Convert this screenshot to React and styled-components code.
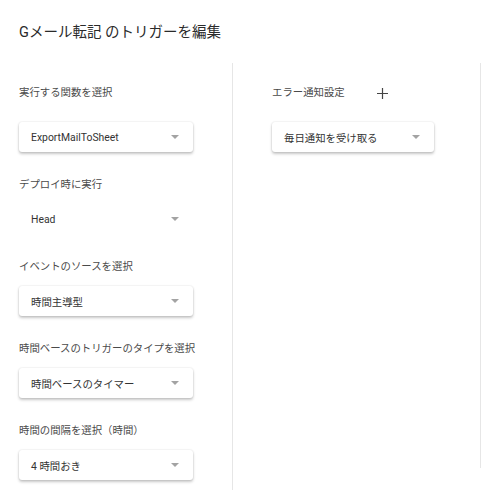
import React from 'react';
import styled, { createGlobalStyle } from 'styled-components';

const GlobalStyle = createGlobalStyle`
  body {
    margin: 0;
    background: #fff;
    font-family: Roboto, "Noto Sans CJK JP", sans-serif;
  }
`;

const Page = styled.div`
  width: 481px;
  height: 500px;
  overflow: hidden;
  padding-left: 19px;
  box-sizing: border-box;
`;

const Title = styled.h1`
  margin: 0;
  height: 63px;
  padding-top: 24px;
  box-sizing: border-box;
  font-size: 14.5px;
  font-weight: 400;
  line-height: 18px;
  color: #2a2a2a;
`;

const Columns = styled.div`
  display: flex;
  align-items: flex-start;
`;

const Column = styled.div`
  box-sizing: border-box;
  width: ${p => p.width}px;
  height: ${p => p.height}px;
  padding: 22px 0 0 ${p => p.inset || 0}px;
  border-right: 1px solid #e6e6e6;
  display: flex;
  flex-direction: column;
`;

const Field = styled.div`
  display: flex;
  flex-direction: column;
  & + & {
    margin-top: 25px;
  }
`;

const LabelRow = styled.div`
  display: flex;
  align-items: center;
  height: 16px;
  margin-bottom: ${p => (p.spaced ? 21 : 11)}px;
`;

const Label = styled.span`
  font-size: 10.4px;
  line-height: 16px;
  color: #4a4a4a;
`;

const AddButton = styled.button`
  margin-left: 32px;
  width: 12px;
  height: 12px;
  padding: 0;
  border: none;
  background: none;
  display: flex;
  align-items: center;
  justify-content: center;
`;

const Select = styled.div`
  box-sizing: border-box;
  width: ${p => p.width}px;
  height: 30px;
  padding: 0 14px 0 12px;
  display: flex;
  align-items: center;
  justify-content: space-between;
  border-radius: 3px;
  background: #fff;
  box-shadow: ${p =>
    p.flat
      ? 'none'
      : '0 2px 3px rgba(0,0,0,0.22), 0 0 2px rgba(0,0,0,0.14)'};
  font-size: 10.4px;
  color: #333;
`;

const Arrow = styled.span`
  width: 0;
  height: 0;
  border-left: 4.5px solid transparent;
  border-right: 4.5px solid transparent;
  border-top: 4.5px solid #a3a3a3;
`;

const Dropdown = ({ value, width = 174, flat }) => (
  <Select width={width} flat={flat}>
    <span>{value}</span>
    <Arrow />
  </Select>
);

const fields = [
  { label: '実行する関数を選択', value: 'ExportMailToSheet', spaced: true },
  { label: 'デプロイ時に実行', value: 'Head', flat: true },
  { label: 'イベントのソースを選択', value: '時間主導型' },
  { label: '時間ベースのトリガーのタイプを選択', value: '時間ベースのタイマー' },
  { label: '時間の間隔を選択（時間）', value: '4 時間おき' }
];

export default function App() {
  return (
    <Page>
      <GlobalStyle />
      <Title>Gメール転記 のトリガーを編集</Title>
      <Columns>
        <Column width={214} height={427}>
          {fields.map(f => (
            <Field key={f.label}>
              <LabelRow spaced={f.spaced}>
                <Label>{f.label}</Label>
              </LabelRow>
              <Dropdown value={f.value} flat={f.flat} />
            </Field>
          ))}
        </Column>
        <Column width={248} height={405} inset={39}>
          <Field>
            <LabelRow spaced>
              <Label>エラー通知設定</Label>
              <AddButton aria-label="追加">
                <svg width="11" height="11" viewBox="0 0 11 11">
                  <path d="M5.5 0v11M0 5.5h11" stroke="#444" strokeWidth="1.2" />
                </svg>
              </AddButton>
            </LabelRow>
            <Dropdown value="毎日通知を受け取る" width={162} />
          </Field>
        </Column>
      </Columns>
    </Page>
  );
}
